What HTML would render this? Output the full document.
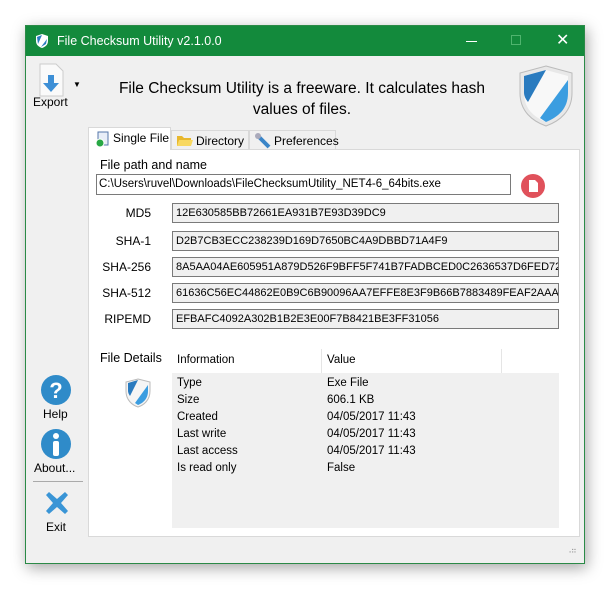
<!DOCTYPE html>
<html><head><meta charset="utf-8"><style>
*{box-sizing:border-box;margin:0;padding:0}
body{width:610px;height:589px;background:#fff;font-family:"Liberation Sans",sans-serif;font-size:12px;color:#000;position:relative;overflow:hidden}
.win{position:absolute;left:25px;top:25px;width:560px;height:539px;background:#f0f0f0;border:1px solid #2b8a47;box-shadow:2px 4px 14px rgba(0,0,0,.35)}
.title{position:absolute;left:0;top:0;width:558px;height:30px;background:#138a3c;color:#fff;font-size:12.5px}
.abs{position:absolute}
.hash{position:absolute;left:146px;width:387px;height:20px;border:1px solid #7a7a7a;background:#f0f0f0;padding:3px 0 0 3px;font-size:11px;white-space:nowrap;overflow:hidden}
.lbl{position:absolute;width:60px;text-align:right;font-size:12px}
.tab{position:absolute;top:104px;height:20px;border:1px solid #d9d9d9;border-bottom:none;background:#f0f0f0;font-size:12px;padding:3px 0 0 24px}
.row{position:absolute;font-size:11.5px}
</style></head><body>
<div class="win">
 <div class="title">
  <svg class="abs" style="left:9px;top:7px" width="14" height="16" viewBox="0 0 14 16"><path d="M7 1L13 3V8C13 12 10 14 7 15C4 14 1 12 1 8V3Z" fill="#fff"/><path d="M2 4L7 2L3 11Z" fill="#2a7bbf"/><path d="M12 6L6 14L11 11Z" fill="#2a7bbf"/></svg>
  <div class="abs" style="left:31px;top:8px">File Checksum Utility v2.1.0.0</div>
  <div class="abs" style="left:440px;top:15px;width:11px;height:1px;background:#fff"></div>
  <div class="abs" style="left:485px;top:9px;width:10px;height:10px;border:1px solid #4fb46e"></div>
  <div class="abs" style="left:530px;top:4px;font-size:16px">✕</div>
 </div>
 <svg class="abs" style="left:13px;top:37px" width="26" height="34" viewBox="0 0 26 34"><path d="M1 1H17L24 8V33H1Z" fill="#fafafa" stroke="#ccc"/><path d="M9 12H15V20H20L12 29L4 20H9Z" fill="#3d8fd6"/></svg>
 <div class="abs" style="left:47px;top:54px;font-size:8px">▼</div>
 <div class="abs" style="left:7px;top:69px;font-size:12px">Export</div>
 <div class="abs" style="left:66px;top:52px;width:420px;text-align:center;font-size:15.5px;line-height:21px">File Checksum Utility is a freeware. It calculates hash<br>values of files.</div>
 <svg class="abs" style="left:492px;top:39px" width="56" height="62" viewBox="0 0 56 62"><path d="M28 1L54 8V28C54 46 42 56 28 61C14 56 2 46 2 28V8Z" fill="#e8e8e8" stroke="#bbb"/><path d="M28 5L50 11V28C50 44 40 52 28 57C16 52 6 44 6 28V11Z" fill="#f8f8f8"/><path d="M6 11L28 5L10 37Q6 32 6 28Z" fill="#2a7bbf"/><path d="M50 15V28C50 44 40 52 28 57L22 53Z" fill="#3b9de0"/></svg>
 <svg class="abs" style="left:14px;top:348px" width="32" height="32"><circle cx="16" cy="16" r="15" fill="#2f8bc9"/><text x="16" y="24" font-size="22" font-weight="bold" fill="#fff" text-anchor="middle" font-family="Liberation Sans">?</text></svg>
 <div class="abs" style="left:17px;top:381px">Help</div>
 <svg class="abs" style="left:14px;top:402px" width="32" height="32"><circle cx="16" cy="16" r="15" fill="#2f8bc9"/><circle cx="16" cy="8" r="3" fill="#fff"/><rect x="13" y="13" width="6" height="15" rx="2" fill="#fff"/></svg>
 <div class="abs" style="left:8px;top:435px">About...</div>
 <div class="abs" style="left:7px;top:455px;width:50px;height:1px;background:#aaa"></div>
 <svg class="abs" style="left:19px;top:465px" width="24" height="24" viewBox="0 0 24 24"><path d="M4 1L12 8L20 1L23 4L16 12L23 20L20 23L12 16L4 23L1 20L8 12L1 4Z" fill="#3a95d6"/></svg>
 <div class="abs" style="left:20px;top:494px">Exit</div>
 <div class="tab" style="left:62px;top:101px;height:23px;width:83px;background:#fff;border-color:#d9d9d9;z-index:2">Single File
  <svg class="abs" style="left:6px;top:3px" width="14" height="16"><rect x="3" y="1" width="10" height="13" fill="#e8eef8" stroke="#5577aa"/><circle cx="5" cy="12" r="4" fill="#28a845" stroke="#fff"/></svg></div>
 <div class="tab" style="left:145px;width:78px">Directory
  <svg class="abs" style="left:4px;top:3px" width="17" height="13"><path d="M1 2H6L8 4H15V12H1Z" fill="#e8b82e"/><path d="M3 6H17L15 12H1Z" fill="#f8d860"/></svg></div>
 <div class="tab" style="left:223px;width:87px">Preferences
  <svg class="abs" style="left:4px;top:1px" width="17" height="17"><path d="M3 3L15 15" stroke="#3a85c8" stroke-width="4"/><circle cx="4" cy="4" r="3" fill="#aab"/></svg></div>
 <div class="abs" style="left:62px;top:123px;width:492px;height:388px;background:#fff;border:1px solid #d9d9d9"></div>
 <div class="abs" style="left:74px;top:132px;font-size:12.5px">File path and name</div>
 <div class="abs" style="left:70px;top:148px;width:415px;height:21px;border:1px solid #7a7a7a;background:#fff;padding:3px 0 0 2px;font-size:11.5px;white-space:nowrap;overflow:hidden">C:\Users\ruvel\Downloads\FileChecksumUtility_NET4-6_64bits.exe</div>
 <svg class="abs" style="left:494px;top:147px" width="26" height="26"><circle cx="13" cy="13" r="12" fill="#e0515b"/><path d="M9 7H15L18 10V19H9Z" fill="#fff"/></svg>
 <div class="lbl" style="left:65px;top:180px">MD5</div><div class="hash" style="top:177px">12E630585BB72661EA931B7E93D39DC9</div>
 <div class="lbl" style="left:65px;top:208px">SHA-1</div><div class="hash" style="top:205px">D2B7CB3ECC238239D169D7650BC4A9DBBD71A4F9</div>
 <div class="lbl" style="left:65px;top:234px">SHA-256</div><div class="hash" style="top:231px">8A5AA04AE605951A879D526F9BFF5F741B7FADBCED0C2636537D6FED7241</div>
 <div class="lbl" style="left:65px;top:260px">SHA-512</div><div class="hash" style="top:257px">61636C56EC44862E0B9C6B90096AA7EFFE8E3F9B66B7883489FEAF2AAA7C3</div>
 <div class="lbl" style="left:65px;top:286px">RIPEMD</div><div class="hash" style="top:283px">EFBAFC4092A302B1B2E3E00F7B8421BE3FF31056</div>
 <div class="abs" style="left:74px;top:325px;font-size:12.5px">File Details</div>
 <svg class="abs" style="left:99px;top:352px" width="26" height="30" viewBox="0 0 26 30"><path d="M13 1L25 4V13C25 22 19 27 13 29C7 27 1 22 1 13V4Z" fill="#f5f5f5" stroke="#bbb"/><path d="M3 5L13 2L5 18Q3 15 3 13Z" fill="#2a7bbf"/><path d="M23 7V13C23 21 18 25 13 27L10 25Z" fill="#3b9de0"/></svg>
 <div class="abs" style="left:146px;top:347px;width:387px;height:155px;background:#f0f0f0"></div>
 <div class="abs" style="left:295px;top:323px;width:1px;height:24px;background:#e5e5e5"></div>
 <div class="abs" style="left:475px;top:323px;width:1px;height:24px;background:#e5e5e5"></div>
 <div class="row" style="left:151px;top:328px">Information</div><div class="row" style="left:301px;top:328px">Value</div>
 <div class="row" style="left:151px;top:349px;line-height:17px">Type<br>Size<br>Created<br>Last write<br>Last access<br>Is read only</div>
 <div class="row" style="left:301px;top:349px;line-height:17px">Exe File<br>606.1 KB<br>04/05/2017 11:43<br>04/05/2017 11:43<br>04/05/2017 11:43<br>False</div>
 <div class="abs" style="left:540px;top:520px;font-size:8px;color:#999;letter-spacing:-1px">⠠⠶</div>
</div>
</body></html>
